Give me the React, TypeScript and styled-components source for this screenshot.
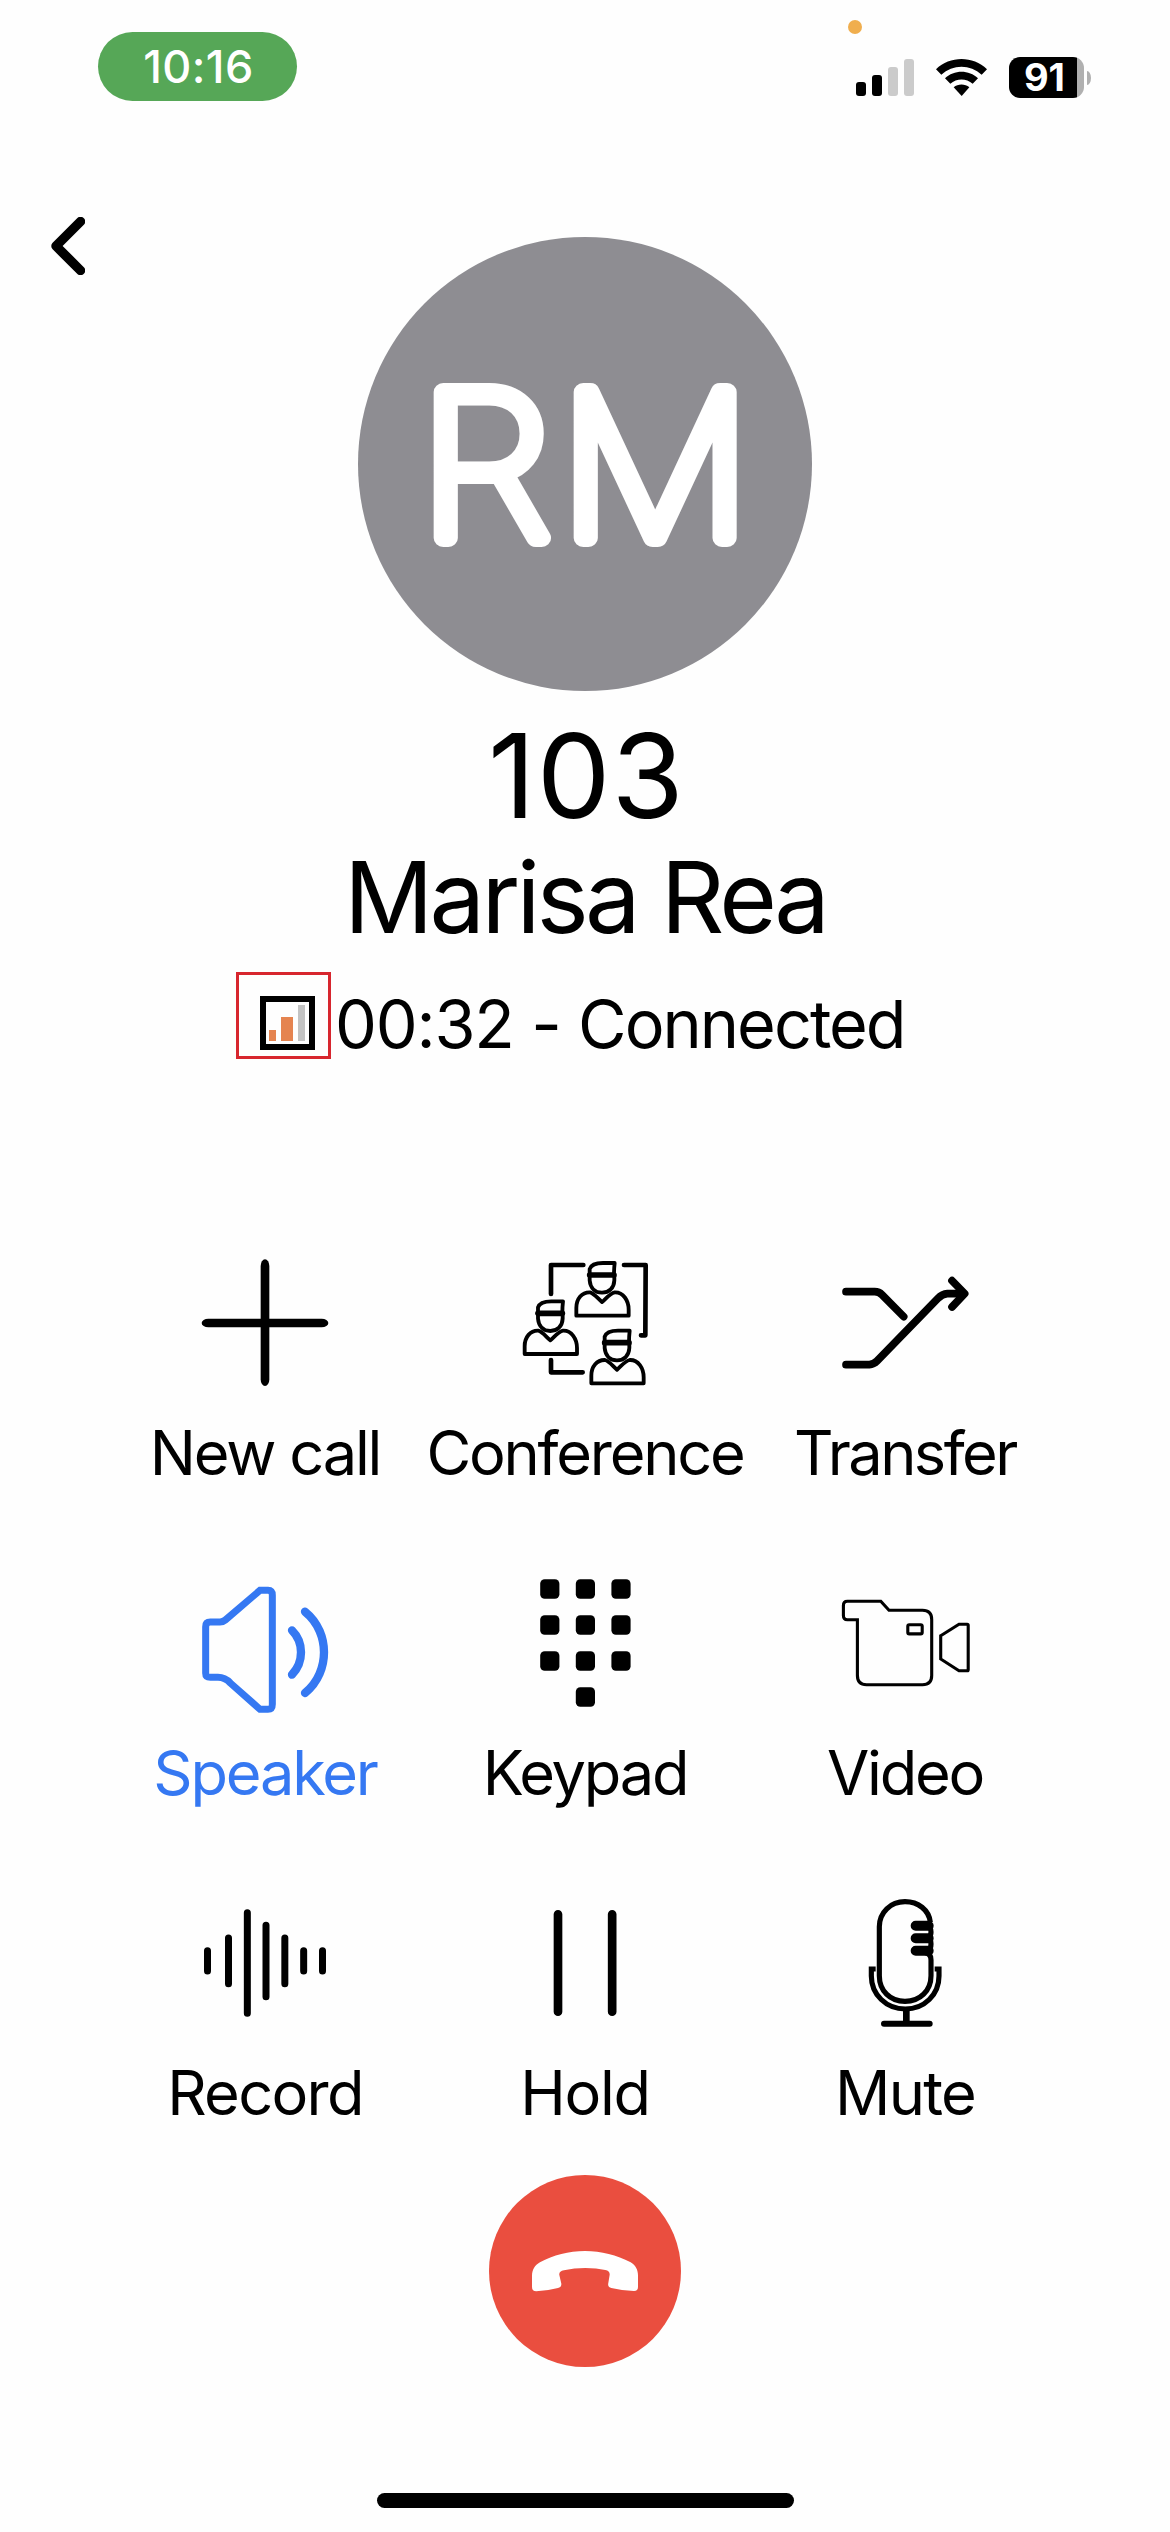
import React from "react";
import styled, { createGlobalStyle } from "styled-components";

const Global = createGlobalStyle`
  body { margin: 0; background: #fff; }
  * { box-sizing: border-box; }
`;

const Screen = styled.main`
  width: 1170px;
  height: 2532px;
  display: flex;
  flex-direction: column;
  background: #fefefe;
  color: #000;
  font-family: Inter, "Liberation Sans", sans-serif;
  overflow: hidden;
`;

const StatusBar = styled.header`
  height: 217px;
  flex: none;
  display: flex;
  justify-content: space-between;
  align-items: flex-start;
  padding: 32px 79px 0 98px;
`;

const TimePill = styled.div`
  width: 199px;
  height: 69px;
  padding-left: 2px;
  border-radius: 35px;
  background: #56a757;
  color: #fff;
  font-size: 45px;
  font-weight: 500;
  line-height: 70px;
  text-align: center;
  letter-spacing: 0.4px;
`;

const Indicators = styled.div`
  position: relative;
  display: flex;
  align-items: center;
  height: 41px;
  margin-top: 25px;
`;

const MicDot = styled.span`
  position: absolute;
  left: -8px;
  top: -37px;
  width: 14px;
  height: 14px;
  border-radius: 50%;
  background: #f0ae4e;
`;

const Signal = styled.div`
  display: flex;
  align-items: flex-end;
  gap: 6px;
  height: 37px;
  margin-right: 22px;
`;

const SignalBar = styled.span<{ $h: number; $on: boolean }>`
  width: 10px;
  height: ${(p) => p.$h}px;
  border-radius: 3px;
  background: ${(p) => (p.$on ? "#000" : "#cbcbcb")};
`;

const Wifi = styled.svg`
  width: 51px;
  height: 37px;
  margin-right: 22px;
`;

const Battery = styled.div`
  width: 75px;
  height: 41px;
  border-radius: 11px;
  background: linear-gradient(to right, #000 68px, #b0b0b0 68px);
  color: #fff;
  font-size: 38px;
  font-weight: 700;
  line-height: 41px;
  padding-left: 15px;
  letter-spacing: -0.3px;
`;

const BatteryTip = styled.span`
  width: 4px;
  height: 14px;
  margin-left: 3px;
  border-radius: 0 4px 4px 0 / 0 7px 7px 0;
  background: #b0b0b0;
`;

const Hero = styled.section`
  display: grid;
  grid-template-columns: 1fr 454px 1fr;
  align-items: start;
`;

const BackButton = styled.button`
  width: 34px;
  height: 58px;
  margin-left: 51px;
  padding: 0;
  border: 0;
  background: none;
  svg { display: block; }
`;

const Avatar = styled.div`
  margin-top: 20px;
  width: 454px;
  height: 454px;
  border-radius: 50%;
  background: #8e8d92;
  overflow: hidden;
`;

const Initials = styled.svg`
  display: block;
  width: 454px;
  height: 454px;
  text {
    font-family: Inter, sans-serif;
    font-weight: 100;
    font-size: 201px;
    fill: #fff;
    stroke: #fff;
    stroke-width: 18px;
    stroke-linejoin: round;
  }
`;

const Extension = styled.h1`
  margin: 20px 0 0;
  padding-left: 3px;
  font-size: 117px;
  font-weight: 400;
  line-height: 129px;
  text-align: center;
  letter-spacing: 1.1px;
`;

const Name = styled.h2`
  margin: 0;
  font-size: 99px;
  font-weight: 400;
  line-height: 114px;
  text-align: center;
  letter-spacing: -3.8px;
`;

const CallStatus = styled.div`
  display: flex;
  height: 87px;
  margin: 18px 0 199px 236px;
`;

const QualityFrame = styled.div`
  width: 95px;
  height: 87px;
  border: 3px solid #d7262e;
  padding: 21px 0 0 21px;
`;

const QualityMeter = styled.div`
  width: 55px;
  height: 54px;
  border: 6px solid #000;
  display: flex;
  align-items: flex-end;
  padding: 0 3px 3px;
`;

const QualityBar = styled.span<{ $w: number; $h: number; $gap: number; $color: string }>`
  width: ${(p) => p.$w}px;
  height: ${(p) => p.$h}px;
  margin-left: ${(p) => p.$gap}px;
  background: ${(p) => p.$color};
`;

const StatusText = styled.span`
  margin: 8px 0 0 4px;
  font-size: 66.5px;
  line-height: 88px;
  white-space: pre;
  letter-spacing: -1.2px;
`;

const StatusState = styled.span`
  letter-spacing: -2px;
`;

const Actions = styled.section`
  display: grid;
  grid-template-columns: repeat(3, 320px);
  grid-auto-rows: 250px;
  row-gap: 70px;
  padding-left: 105px;
`;

const Action = styled.button<{ $active?: boolean }>`
  display: flex;
  flex-direction: column;
  align-items: center;
  padding: 0;
  border: 0;
  background: none;
  font-family: inherit;
  color: ${(p) => (p.$active ? "#3578f2" : "#000")};
`;

const ActionIcon = styled.svg`
  width: 136px;
  height: 140px;
  flex: none;
  fill: none;
  stroke: currentColor;
`;

const ActionLabel = styled.span<{ $track: number }>`
  font-size: 61.3px;
  line-height: 110px;
  white-space: nowrap;
  letter-spacing: ${(p) => p.$track}px;
`;

const HangUp = styled.button`
  flex: none;
  align-self: center;
  width: 192px;
  height: 192px;
  margin-top: 27px;
  padding: 0;
  border: 0;
  border-radius: 50%;
  background: #ea4e3f;
  svg { display: block; }
`;

const HomeIndicator = styled.div`
  width: 417px;
  height: 15px;
  border-radius: 8px;
  background: #000;
  margin: auto auto 24px;
`;

const Person = ({ x, y }: { x: number; y: number }) => (
  <g transform={`translate(${x} ${y})`}>
    <path d="M-37 41V23Q-31 5 3 5H38Q36 22 36 41" />
    <path d="M-37 41H36" strokeWidth="17" />
    <path d="M-37 44V57C-35 80-21 94 0 94S36 80 37 57V44" />
    <path d="M-77 163V140C-77 112-60 92-36 93C-24 96-12 112 0 122C12 112 24 96 38 93C64 92 80 118 80 145V163Z" />
  </g>
);

const icons = {
  newCall: (
    <ActionIcon viewBox="171 84 408 420">
      <g fill="currentColor" stroke="none">
        <rect x="362" y="88" width="26" height="380" rx="13" ry="20" />
        <rect x="185" y="266" width="380" height="26" rx="20" ry="13" />
      </g>
    </ActionIcon>
  ),
  conference: (
    <ActionIcon viewBox="51 54 408 420" strokeWidth="11.5" strokeLinecap="round" strokeLinejoin="round">
      <Person x={306} y={64} />
      <Person x={151} y={179} />
      <Person x={351} y={267} />
      <path d="M153 162V75H250M372 75H437L436 286H423M153 360V397H248" strokeWidth="14" />
    </ActionIcon>
  ),
  transfer: (
    <ActionIcon viewBox="291 84 408 420" strokeWidth="23" strokeLinecap="round" strokeLinejoin="round">
      <path d="M318 185H404Q417 185 426 194L491 260" />
      <path d="M318 404H388Q401 403 411 393L593 206Q607 192 622 191H665" />
      <path d="M636 152L674 191L636 231" />
    </ActionIcon>
  ),
  speaker: (
    <ActionIcon viewBox="171 84 408 420" strokeWidth="21" strokeLinecap="round" strokeLinejoin="round">
      <path
        d="M197 230Q197 216 211 216H240Q249 216 256 210L360 121H384Q397 121 397 136V463Q397 478 384 478H360L271 399Q255 382 234 382H211Q197 382 197 370Z"
        strokeLinejoin="miter"
      />
      <path d="M456 241Q483 268 483 307Q483 346 456 374M495 185C536 218 552 266 552 307S536 396 495 429" strokeWidth="25" />
    </ActionIcon>
  ),
  keypad: (
    <ActionIcon viewBox="0 0 136 140">
      <g fill="currentColor" stroke="none">
        {[0, 1, 2, 3, 4, 5, 6, 7, 8, 10].map((i) => (
          <rect
            key={i}
            x={23.2 + (i % 3) * 35.6}
            y={1.2 + Math.floor(i / 3) * 36}
            width="19.2"
            height="19.6"
            rx="4.5"
          />
        ))}
      </g>
    </ActionIcon>
  ),
  video: (
    <ActionIcon viewBox="1 0 136 140" strokeWidth="3.1">
      <path d="M21.4 41.7H11.4Q7.4 41.7 7.4 37.5V27.5Q7.4 23.3 11.4 23.3H44.8L53 32.3H86.5Q95.7 32.3 95.7 41.5V97.5Q95.7 106.7 86.5 106.7H30.5Q21.4 106.7 21.4 97.5V40.2" />
      <rect x="71.8" y="46.7" width="14.4" height="9.2" rx="1.5" />
      <path d="M104.700 57.7L123 46.3H131.200Q132.200 46.3 132.200 47.3V91.7Q132.200 92.7 131.200 92.7H123L104.700 81Z" />
    </ActionIcon>
  ),
  record: (
    <ActionIcon viewBox="171 84 408 420" strokeWidth="21" strokeLinecap="round">
      <path d="M202.500 242V303M265.500 204V341M322 128V430M378 166V380M434.500 204V341M491 242V303M547.500 242V303" />
    </ActionIcon>
  ),
  hold: (
    <ActionIcon viewBox="1131 84 408 420" strokeWidth="26" strokeLinecap="round">
      <path d="M1254 133V425M1416.500 133V425" />
    </ActionIcon>
  ),
  mute: (
    <ActionIcon viewBox="111 84 408 420" strokeWidth="15.500">
      <path d="M391 157C387 120 355 95 315 95C272 95 238 127 238 170V317C238 362 270 394 315 394C360 394 393 362 393 317V270Q393 250 375 248" />
      <path d="M347 167.500H386M347 205H386M347 242H386" strokeWidth="30" strokeLinecap="round" />
      <path d="M386 172Q393 174 393 186T386 205Q393 209 393 222T386 240" />
      <path d="M227 297H214V318C214 374 259 417 316 417S417 374 417 318V297H404" />
      <path d="M319 417V458" strokeWidth="20" />
      <path d="M252 461.500H389" strokeWidth="18" strokeLinecap="round" />
    </ActionIcon>
  ),
};

const actions: { label: string; icon: keyof typeof icons; track: number; active?: boolean }[] = [
  { label: "New call", icon: "newCall", track: -2.2 },
  { label: "Conference", icon: "conference", track: -2.2 },
  { label: "Transfer", icon: "transfer", track: -2.5 },
  { label: "Speaker", icon: "speaker", track: -2.2, active: true },
  { label: "Keypad", icon: "keypad", track: -2.2 },
  { label: "Video", icon: "video", track: -2.2 },
  { label: "Record", icon: "record", track: -1.7 },
  { label: "Hold", icon: "hold", track: -1.3 },
  { label: "Mute", icon: "mute", track: -1.7 },
];

export default function App() {
  return (
    <Screen>
      <Global />
      <StatusBar>
        <TimePill>10:16</TimePill>
        <Indicators>
          <MicDot />
          <Signal>
            <SignalBar $h={14} $on />
            <SignalBar $h={21} $on />
            <SignalBar $h={29} $on={false} />
            <SignalBar $h={37} $on={false} />
          </Signal>
          <Wifi viewBox="348 177 153 111">
            <path d="M348 208C390 167 459 167 501 208L485 224C451 192 398 192 364 224Z" />
            <path d="M375 235C402 209 447 209 474 235L458 251C439 234 410 234 391 251Z" />
            <path d="M401 262C414 251 435 251 448 262L425 288Z" />
          </Wifi>
          <Battery>91</Battery>
          <BatteryTip />
        </Indicators>
      </StatusBar>

      <Hero>
        <BackButton aria-label="Back">
          <svg width="34" height="58" viewBox="0 0 34 58">
            <path d="M29.500 4.500L5 29L29.500 53.500" fill="none" stroke="#000" strokeWidth="9.500" strokeLinecap="round" strokeLinejoin="round" />
          </svg>
        </BackButton>
        <Avatar>
          <Initials viewBox="0 0 454 454">
            <text transform="translate(61 301) scale(1.07 1)">R</text>
            <text transform="translate(201 301) scale(1.07 1)">M</text>
          </Initials>
        </Avatar>
      </Hero>

      <Extension>103</Extension>
      <Name>Marisa Rea</Name>
      <CallStatus>
        <QualityFrame>
          <QualityMeter>
            <QualityBar $w={7} $h={11} $gap={0} $color="#e58450" />
            <QualityBar $w={12} $h={24} $gap={5} $color="#e58450" />
            <QualityBar $w={7} $h={36} $gap={5} $color="#c3c3c3" />
          </QualityMeter>
        </QualityFrame>
        <StatusText>
          00:32 - <StatusState>Connected</StatusState>
        </StatusText>
      </CallStatus>

      <Actions>
        {actions.map((a) => (
          <Action key={a.label} $active={a.active}>
            {icons[a.icon]}
            <ActionLabel $track={a.track}>{a.label}</ActionLabel>
          </Action>
        ))}
      </Actions>

      <HangUp aria-label="End call">
        <svg width="192" height="192" viewBox="387 75 576 576">
          <path
            fill="#fff"
            d="M516 378C516 360 524 346 540 337C580 315 626 303 675 303S770 315 812 337C827 346 834 360 834 376V411Q834 423 822 423Q786 422 754 414Q742 411 745 399L749 374Q750 363 736 360Q710 354 676 354T612 361Q596 364 598 375L604 401Q605 411 594 414Q564 422 529 424Q516 424 516 411Z"
          />
        </svg>
      </HangUp>
      <HomeIndicator />
    </Screen>
  );
}
